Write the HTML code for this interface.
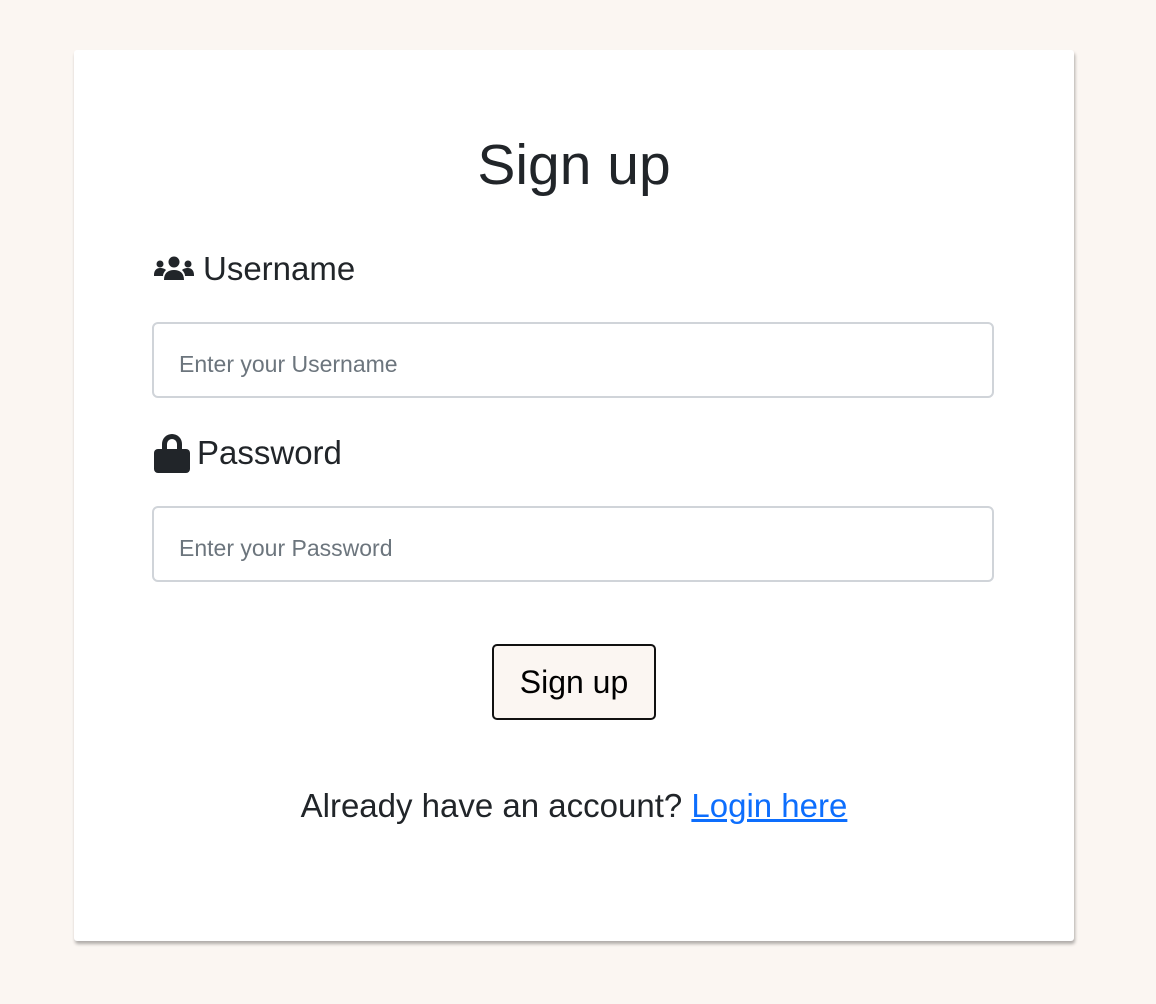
<!DOCTYPE html>
<html><head><meta charset="utf-8"><style>
html,body{margin:0;padding:0;background:#fbf6f2;width:1156px;height:1004px;overflow:hidden;font-family:"Liberation Sans","DejaVu Sans",sans-serif;color:#212529}
.card{position:absolute;left:74px;top:50px;width:1000px;height:891px;background:#fff;border-radius:3px;box-shadow:1px 3px 3px rgba(0,0,0,.3)}
h1{position:absolute;left:74px;width:1000px;top:137px;margin:0;text-align:center;font-weight:400;font-size:57px;line-height:1;}
.lbl{position:absolute;left:153px;font-size:33px;display:flex;align-items:center;gap:8px}
.inp{position:absolute;left:152px;width:842px;height:76px;border:2px solid #d0d4d9;border-radius:6px;box-sizing:border-box;background:#fff;font-size:23px;color:#6c757d;padding-left:25px;line-height:80px}
.btn{position:absolute;left:492px;top:644px;width:164px;height:76px;border:2px solid #111;border-radius:5px;box-sizing:border-box;background:#fbf6f2;font-size:32px;text-align:center;line-height:72px;color:#000}
.foot{position:absolute;left:74px;width:1000px;top:787px;text-align:center;font-size:33px}
.foot a{color:#0d6efd;text-decoration:underline}
</style></head><body>
<div class="card"></div>
<h1>Sign up</h1>
<div class="lbl" style="top:250px">
<svg width="42" height="30" viewBox="0 0 40 30"><circle cx="6" cy="10" r="3.5" fill="#212529"/><circle cx="34" cy="10" r="3.5" fill="#212529"/><circle cx="20" cy="8" r="5.5" fill="#212529"/><path d="M0 21c0-5 3-7 6-7s5 1 6 2c-2 2-3 4-3 6H0z M40 21c0-5-3-7-6-7s-5 1-6 2c2 2 3 4 3 6h9z M10 26c0-7 4-10 10-10s10 3 10 10z" fill="#212529"/></svg>
<span>Username</span></div>
<div class="inp" style="top:322px">Enter your Username</div>
<div class="lbl" style="top:432px">
<svg width="38" height="42" viewBox="0 0 38 42"><path d="M9 18v-6a10 10 0 0 1 20 0v6h-5v-6a5 5 0 0 0-10 0v6z" fill="#212529"/><rect x="1" y="17" width="36" height="24" rx="4" fill="#212529"/></svg>
<span style="margin-left:-2px">Password</span></div>
<div class="inp" style="top:506px">Enter your Password</div>
<div class="btn">Sign up</div>
<div class="foot">Already have an account? <a>Login here</a></div>
</body></html>
